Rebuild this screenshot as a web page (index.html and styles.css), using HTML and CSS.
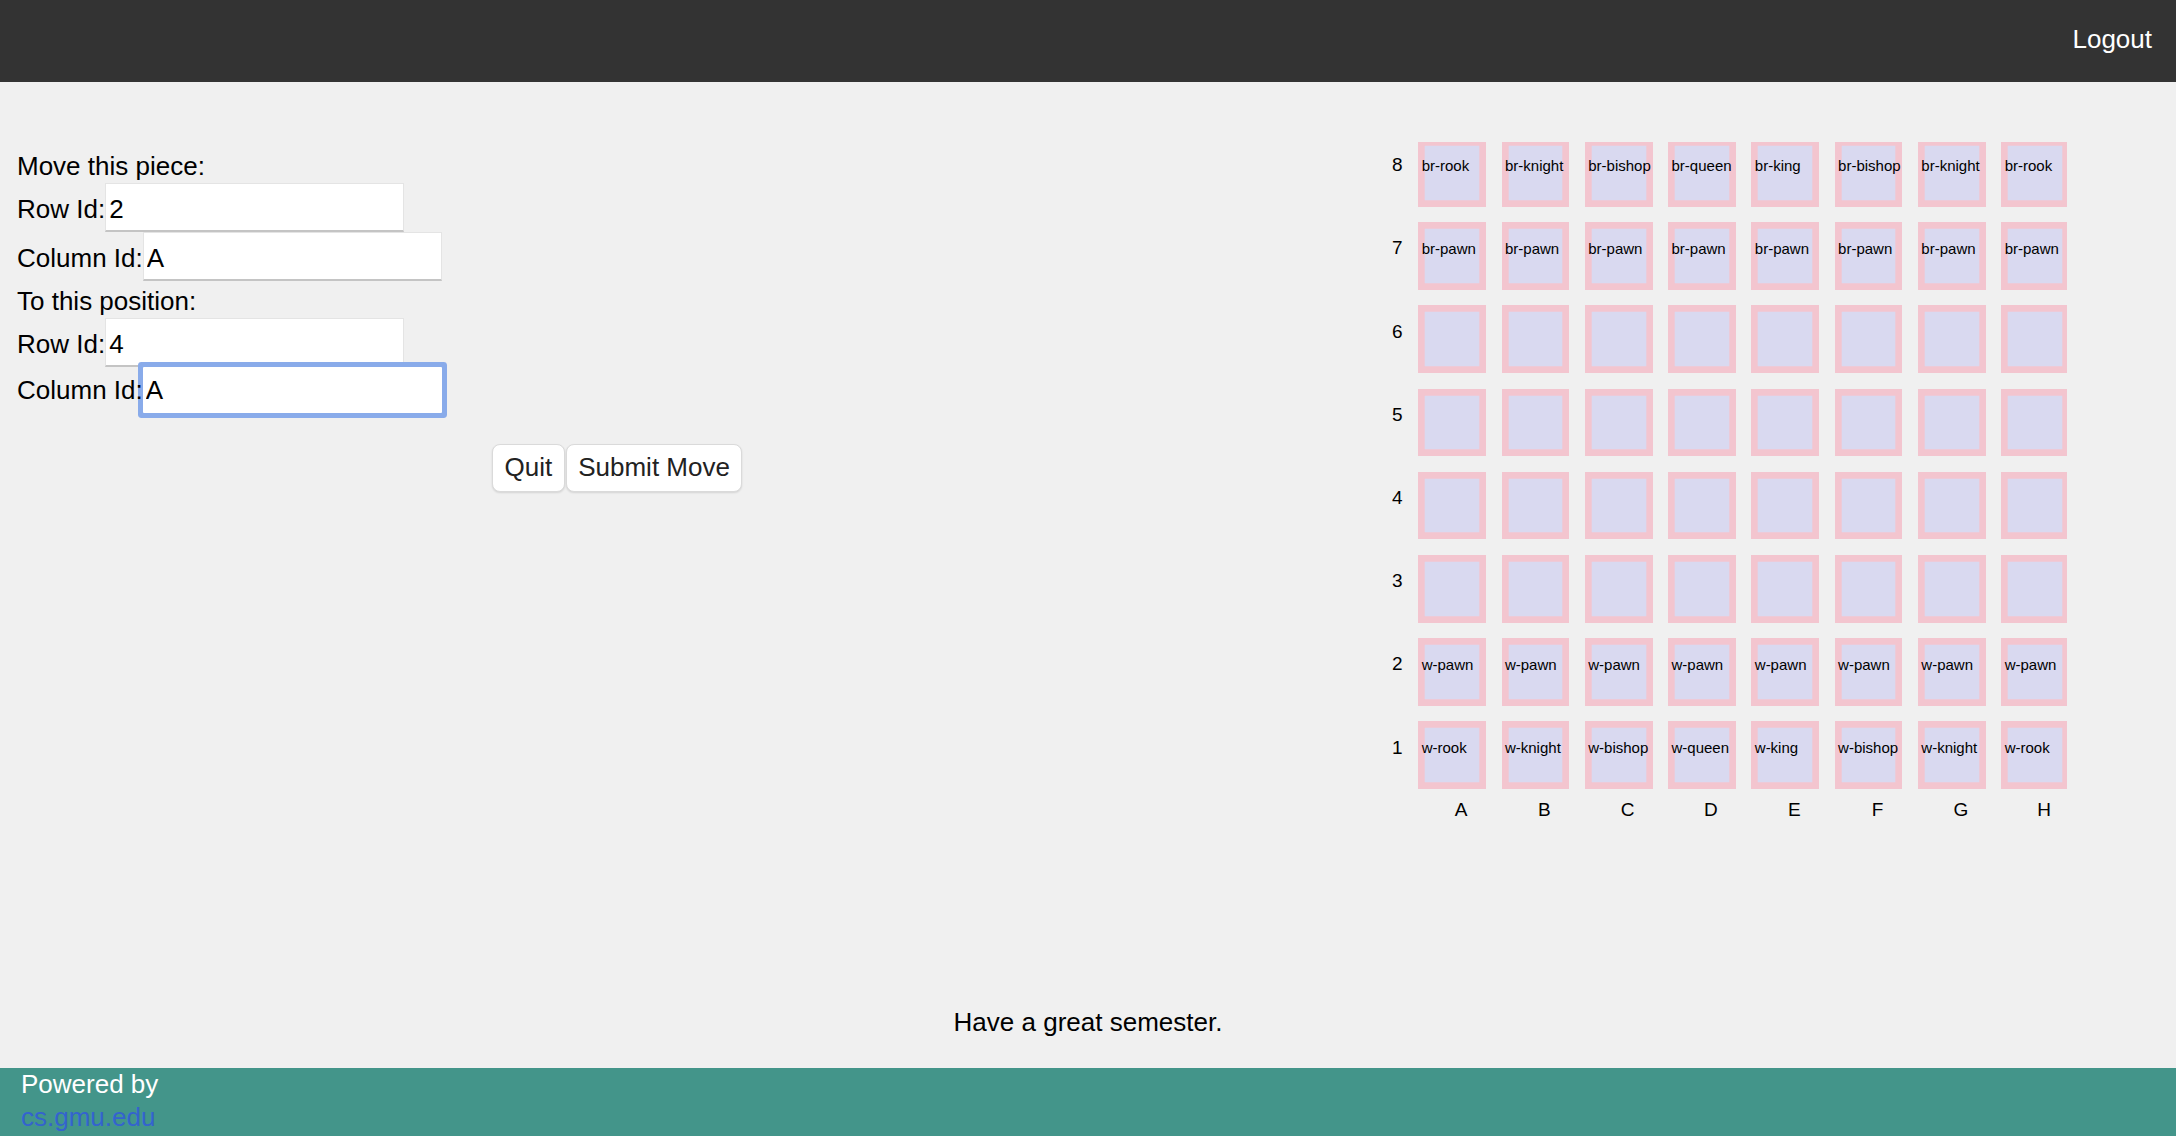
FILE: index.html
```html
<!DOCTYPE html>
<html lang="en">
<head>
<meta charset="utf-8">
<title>Chess</title>
<link rel="stylesheet" href="styles.css">
</head>
<body>
<div class="page">
  <header class="topbar">
    <a class="logout" href="#">Logout</a>
  </header>

  <main class="content">
    <form class="move-form">
      <div class="heading">Move this piece:</div>
      <div class="field"><label>Row Id:</label><input class="box" type="text" value="2"></div>
      <div class="field"><label>Column Id:</label><input class="box" type="text" value="A"></div>
      <div class="heading second">To this position:</div>
      <div class="field"><label>Row Id:</label><input class="box" type="text" value="4"></div>
      <div class="field"><label>Column Id:</label><input class="box focus" type="text" value="A"></div>
      <div class="actions">
        <button type="button" class="btn quit">Quit</button>
        <button type="button" class="btn">Submit Move</button>
      </div>
    </form>

    <section class="board-wrap">
      <div class="board">
        <div class="rank">8</div>
        <div class="sq">br-rook</div><div class="sq">br-knight</div><div class="sq">br-bishop</div><div class="sq">br-queen</div><div class="sq">br-king</div><div class="sq">br-bishop</div><div class="sq">br-knight</div><div class="sq">br-rook</div>

        <div class="rank">7</div>
        <div class="sq">br-pawn</div><div class="sq">br-pawn</div><div class="sq">br-pawn</div><div class="sq">br-pawn</div><div class="sq">br-pawn</div><div class="sq">br-pawn</div><div class="sq">br-pawn</div><div class="sq">br-pawn</div>

        <div class="rank">6</div>
        <div class="sq"></div><div class="sq"></div><div class="sq"></div><div class="sq"></div><div class="sq"></div><div class="sq"></div><div class="sq"></div><div class="sq"></div>

        <div class="rank">5</div>
        <div class="sq"></div><div class="sq"></div><div class="sq"></div><div class="sq"></div><div class="sq"></div><div class="sq"></div><div class="sq"></div><div class="sq"></div>

        <div class="rank">4</div>
        <div class="sq"></div><div class="sq"></div><div class="sq"></div><div class="sq"></div><div class="sq"></div><div class="sq"></div><div class="sq"></div><div class="sq"></div>

        <div class="rank">3</div>
        <div class="sq"></div><div class="sq"></div><div class="sq"></div><div class="sq"></div><div class="sq"></div><div class="sq"></div><div class="sq"></div><div class="sq"></div>

        <div class="rank">2</div>
        <div class="sq">w-pawn</div><div class="sq">w-pawn</div><div class="sq">w-pawn</div><div class="sq">w-pawn</div><div class="sq">w-pawn</div><div class="sq">w-pawn</div><div class="sq">w-pawn</div><div class="sq">w-pawn</div>

        <div class="rank">1</div>
        <div class="sq">w-rook</div><div class="sq">w-knight</div><div class="sq">w-bishop</div><div class="sq">w-queen</div><div class="sq">w-king</div><div class="sq">w-bishop</div><div class="sq">w-knight</div><div class="sq">w-rook</div>

        <div class="corner"></div>
        <div class="file">A</div><div class="file">B</div><div class="file">C</div><div class="file">D</div><div class="file">E</div><div class="file">F</div><div class="file">G</div><div class="file">H</div>
      </div>
    </section>
  </main>

  <p class="note">Have a great semester.</p>

  <footer class="footer">
    <div>Powered by</div>
    <div><a href="#">cs.gmu.edu</a></div>
  </footer>
</div>
</body>
</html>
```

FILE: styles.css
```css
html {
  background: #ffffff;
}

body {
  margin: 0;
  font-family: "Liberation Sans", Arial, Helvetica, sans-serif;
  color: #000;
}

.page {
  height: 1136px;
  display: flex;
  flex-direction: column;
  background: #f0f0f0;
}

/* ---------- top bar ---------- */
.topbar {
  flex: none;
  height: 82px;
  box-sizing: border-box;
  background: #333333;
  display: flex;
  justify-content: flex-end;
  align-items: flex-start;
  padding: 24px 24px 0 0;
}

.logout {
  color: #ffffff;
  text-decoration: none;
  font-size: 26px;
  line-height: 30px;
}

/* ---------- main ---------- */
.content {
  flex: 1;
  display: flex;
  align-items: flex-start;
}

.move-form {
  flex: 1;
  margin: 0;
  padding: 68.5px 0 0 17px;
  font-size: 26px;
  line-height: 30px;
}

.heading {
  margin-bottom: 2.5px;
}

.heading.second {
  margin-top: 4.5px;
}

.field {
  display: flex;
  align-items: baseline;
}

.field label {
  position: relative;
  z-index: 1;
  white-space: nowrap;
}

.box {
  width: 299px;
  height: 49px;
  box-sizing: border-box;
  margin: 0;
  padding: 4px 3px 0;
  border: 1px solid #e4e4e4;
  border-bottom: 2px solid #c4c4c4;
  border-radius: 0;
  background: #ffffff;
  font-family: inherit;
  font-size: 26px;
  line-height: 30px;
  color: #000;
  outline: none;
}

.box.focus {
  height: 46px;
  padding: 0 3px;
  border: none;
  border-radius: 1px;
  box-shadow: 0 0 0 5px #89abea;
}

.actions {
  display: flex;
  gap: 1px;
  margin: 31px 0 0 475px;
}

.btn {
  height: 48px;
  margin: 0;
  padding: 0 11.5px 3px;
  font-family: inherit;
  font-size: 26px;
  line-height: 30px;
  color: #222222;
  background: #ffffff;
  border: 1px solid #dadada;
  border-radius: 8px;
  box-shadow: 0 1px 2px rgba(0, 0, 0, 0.12);
}

/* ---------- board ---------- */
.board-wrap {
  flex: none;
  width: 675px;
  margin: 60px 109px 0 0;
  padding-bottom: 8px;
  overflow: hidden;
}

.board {
  margin-top: -3px;
  display: grid;
  grid-template-columns: 10.7px repeat(8, 67.7px);
  grid-template-rows: repeat(8, 67.7px) auto;
  column-gap: 15.6px;
  row-gap: 15.5px;
}

.rank {
  font-size: 19px;
  line-height: 22px;
  padding-top: 15.2px;
}

.sq {
  box-sizing: border-box;
  background: #d9d9f0;
  box-shadow: inset 0 0 0 6.7px #f3c5cf;
  padding: 18px 0 0 3.4px;
  font-size: 15px;
  line-height: 17px;
  white-space: nowrap;
}

.file {
  margin-top: -6px;
  font-size: 19px;
  line-height: 22px;
  text-align: center;
  padding-left: 18px;
}

/* ---------- bottom ---------- */
.note {
  flex: none;
  margin: 0 0 31.5px;
  text-align: center;
  font-size: 26px;
  line-height: 30px;
}

.footer {
  flex: none;
  height: 68px;
  box-sizing: border-box;
  background: #43958a;
  color: #ffffff;
  padding-left: 21px;
  font-size: 26px;
  line-height: 33px;
}

.footer a {
  color: #3463cf;
  text-decoration: none;
}
```
